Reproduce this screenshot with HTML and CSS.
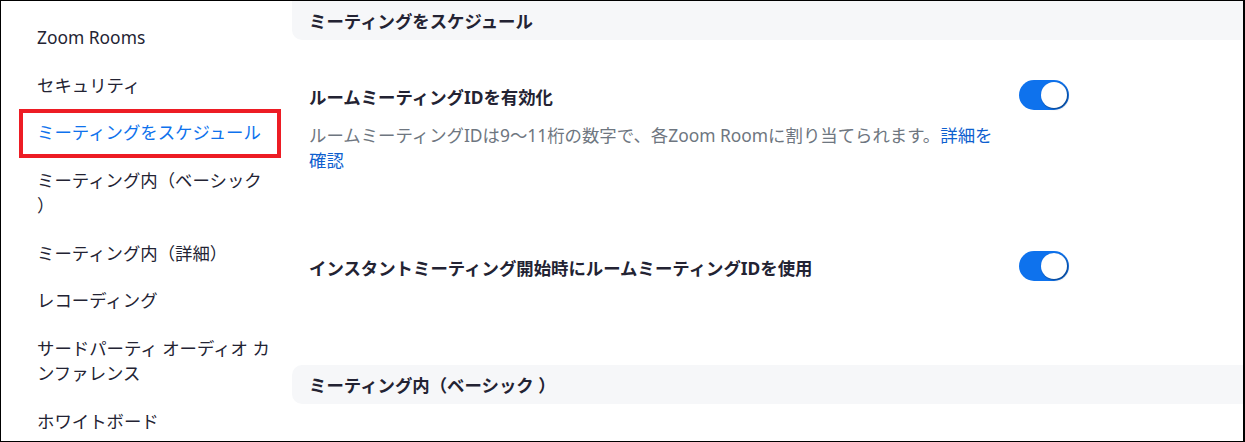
FILE: index.html
```html
<!DOCTYPE html>
<html lang="ja">
<head>
<meta charset="utf-8">
<title>Zoom Rooms 設定</title>
<link rel="stylesheet" href="styles.css">
</head>
<body>
<div class="frame">
  <nav class="sidebar">
    <div class="nav-item">Zoom Rooms</div>
    <div class="nav-item">セキュリティ</div>
    <div class="nav-item active">ミーティングをスケジュール</div>
    <div class="nav-item">ミーティング内（ベーシック ）</div>
    <div class="nav-item">ミーティング内（詳細）</div>
    <div class="nav-item">レコーディング</div>
    <div class="nav-item">サードパーティ オーディオ カンファレンス</div>
    <div class="nav-item">ホワイトボード</div>
  </nav>
  <main class="main">
    <div class="section-head first">ミーティングをスケジュール</div>
    <div class="setting">
      <div class="setting-text">
        <div class="setting-title">ルームミーティングIDを有効化</div>
        <div class="setting-desc">ルームミーティングIDは9～11桁の数字で、各Zoom Roomに割り当てられます。<a class="link" href="#">詳細を確認</a></div>
      </div>
      <div class="toggle"><span class="knob"></span></div>
    </div>
    <div class="setting">
      <div class="setting-text">
        <div class="setting-title">インスタントミーティング開始時にルームミーティングIDを使用</div>
      </div>
      <div class="toggle"><span class="knob"></span></div>
    </div>
    <div class="section-head second">ミーティング内（ベーシック ）</div>
  </main>
</div>
</body>
</html>
```

FILE: styles.css
```css
html, body {
  margin: 0;
  padding: 0;
  background: #fff;
}
body {
  font-family: "Noto Sans", "Noto Sans CJK JP", sans-serif;
  font-size: 17.4px;
  color: #232333;
  text-spacing-trim: space-all;
}
.frame {
  box-sizing: border-box;
  width: 1245px;
  height: 442px;
  border: 1px solid #000;
  border-right-width: 2px;
  display: flex;
  overflow: hidden;
  background: #fff;
}
.sidebar {
  width: 291px;
  flex: none;
  padding-top: 17px;
  box-sizing: border-box;
}
.nav-item {
  margin: 0 0 7px 22px;
  width: 254px;
  box-sizing: border-box;
  padding: 7px 0 8px 14px;
  line-height: 25.5px;
  color: #232333;
}
.nav-item.active {
  color: #0e72ed;
  outline: 4px solid #ed1c24;
}
.main {
  flex: 1;
  min-width: 0;
}
.section-head {
  background: #f6f7f9;
  font-weight: 700;
  padding-left: 17px;
  display: flex;
  align-items: center;
  color: #232333;
}
.section-head.first {
  height: 39px;
  border-radius: 0 0 0 10px;
}
.section-head.second {
  height: 39px;
  margin-top: 46px;
  border-radius: 10px 0 0 10px;
}
.setting {
  display: flex;
  align-items: flex-start;
  padding: 44.5px 0 38.5px 17px;
}
.setting-text {
  width: 690px;
  flex: none;
}
.setting-title {
  font-weight: 700;
  line-height: 25px;
  color: #232333;
}
.setting-desc {
  margin-top: 13px;
  line-height: 25px;
  color: #6e7680;
}
.link {
  color: #0e5fcf;
  text-decoration: none;
}
.toggle {
  margin-left: 20px;
  margin-top: -5px;
  width: 50px;
  height: 30px;
  border-radius: 15px;
  background: #0e72ed;
  display: flex;
  align-items: center;
  justify-content: flex-end;
  padding: 0 2px;
  box-sizing: border-box;
  flex: none;
}
.knob {
  width: 26px;
  height: 26px;
  border-radius: 50%;
  background: #fff;
  box-shadow: 1px 1px 2px rgba(0, 0, 0, 0.45);
}
```
